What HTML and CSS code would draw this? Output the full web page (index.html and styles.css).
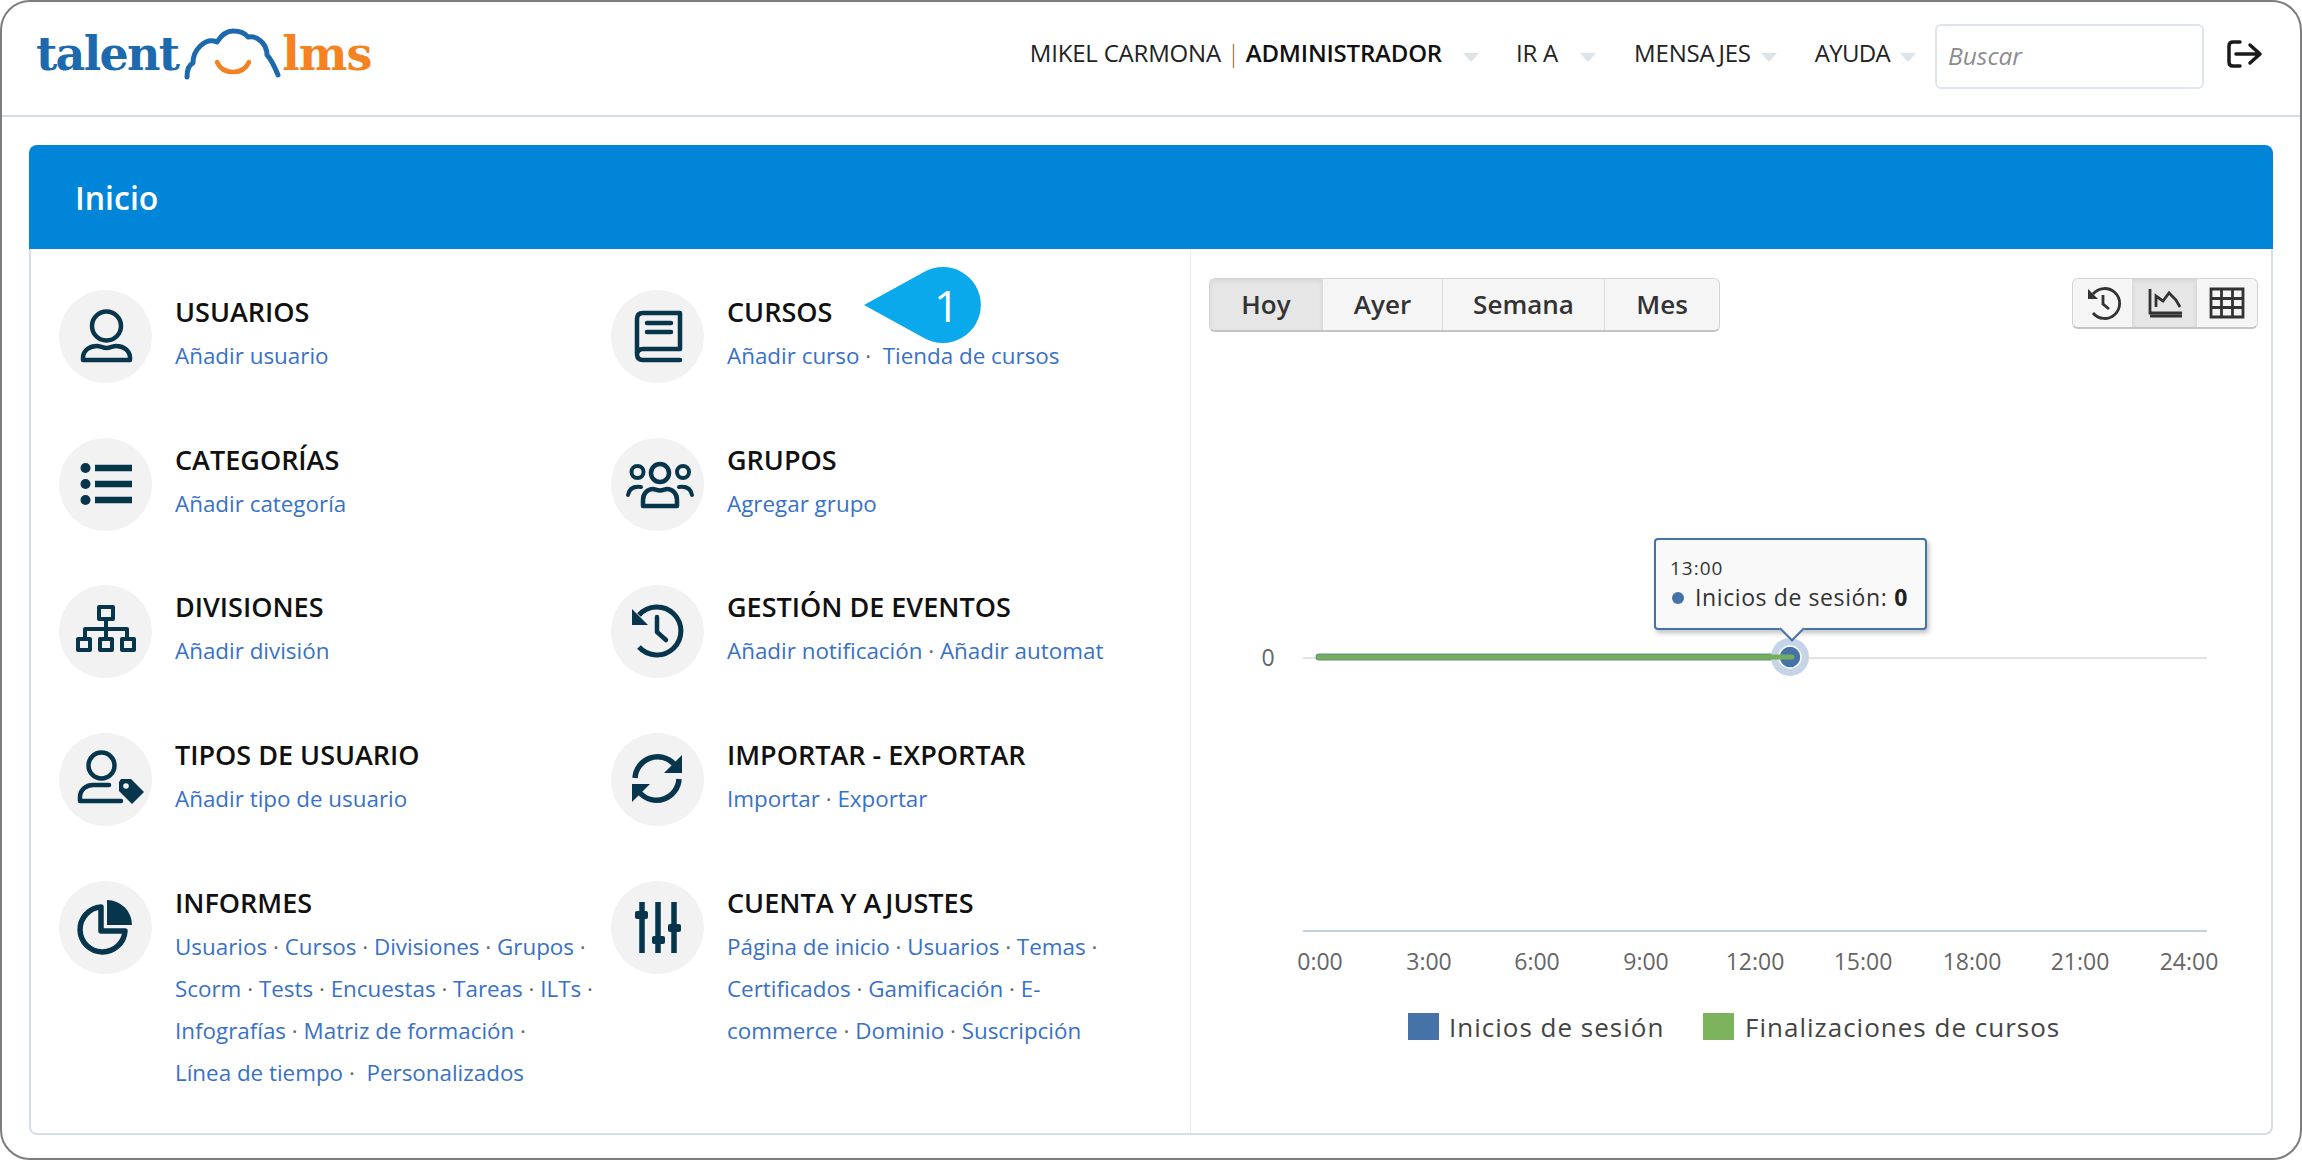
FILE: index.html
```html
<!DOCTYPE html>
<html lang="es">
<head>
<meta charset="utf-8">
<title>TalentLMS - Inicio</title>
<link rel="stylesheet" href="styles.css">
</head>
<body>
<div class="frame">
  <header class="topbar">
    <div class="logo">
      <span class="logo-talent">talent</span>
      <svg class="logo-cloud" width="102" height="52" viewBox="0 0 102 52">
        <path class="cloud-line" d="M5 49C5 43 7 37 11 35 11 22 23 9 35 14 40 6 46 3 51 3 58 3 63 5 66 9 75 7 85 16 85 27 90 32 93 40 96 47"/>
        <path class="smile-line" d="M35 34c3 7 9 10 16 10s13-3 16-10"/>
      </svg>
      <span class="logo-lms">lms</span>
    </div>
    <nav class="nav">
      <span class="nav-user">MIKEL CARMONA <span class="nav-pipe">|</span> <b class="nav-role">ADMINISTRADOR</b></span>
      <i class="caret caret-wide caret-first"></i>
      <span class="nav-item">IR A</span>
      <i class="caret caret-wide caret-second"></i>
      <span class="nav-item">MENSA<span class="gap-j">J</span>ES</span>
      <i class="caret"></i>
      <span class="nav-item nav-tight">AYUDA</span>
      <i class="caret caret-last"></i>
      <div class="search">Buscar</div>
      <svg class="logout" width="36" height="28" viewBox="0 0 36 28">
        <path class="logout-line" d="M13 2H6Q2 2 2 6V22Q2 26 6 26H13M9 14H32M23 5L33 14L23 23"/>
      </svg>
    </nav>
  </header>

  <main class="main">
    <section class="card">
      <h1 class="card-head">Inicio</h1>
      <div class="card-body">
        <div class="menu">
          <div class="item">
            <svg class="ico" viewBox="0 0 93 93"><circle class="disc" cx="46.5" cy="46.5" r="46.5"/><circle class="ln" cx="47.5" cy="36" r="14.5"/><path class="ln" d="M24 70v-2c0-8 7-12 14-12 3 0 6 2 9.500 2s6.500-2 9.500-2c7 0 14 4 14 12v2z"/></svg>
            <div class="txt"><h2>USUARIOS</h2><p><a>Añadir usuario</a></p></div>
          </div>
          <div class="item item-badge">
            <svg class="ico" viewBox="0 0 93 93"><circle class="disc" cx="46.500" cy="46.500" r="46.500"/><path class="ln" d="M69 59V23H32q-6 0-6 6V64q0 6 6 6H69M26 65q0-6 6-6H69"/><path class="ln" d="M36 33H60M36 42H60"/></svg>
            <div class="txt"><h2>CURSOS</h2><p><a>Añadir curso</a> ·&nbsp; <a>Tienda de cursos</a></p></div>
            <div class="badge">
              <svg width="118" height="76" viewBox="0 0 118 76"><path class="badge-shape" d="M0 38 60 5A38 38 0 1 1 60 71Z"/></svg>
              <span class="badge-num">1</span>
            </div>
          </div>

          <div class="item">
            <svg class="ico" viewBox="0 0 93 93"><circle class="disc" cx="46.500" cy="46.500" r="46.500"/><circle class="fill" cx="26.500" cy="30" r="5"/><circle class="fill" cx="26.500" cy="46" r="5"/><circle class="fill" cx="26.500" cy="62" r="5"/><path class="ln ln6" d="M36 30H73M36 46H73M36 62H73"/></svg>
            <div class="txt"><h2>CATEGORÍAS</h2><p><a>Añadir categoría</a></p></div>
          </div>
          <div class="item">
            <svg class="ico" viewBox="0 0 93 93"><circle class="disc" cx="46.500" cy="46.500" r="46.500"/><circle class="ln" cx="49" cy="35" r="9"/><circle class="ln ln35" cx="26.500" cy="34" r="6"/><circle class="ln ln35" cx="72" cy="34" r="6"/><path class="ln" d="M32 68V62c0-7 5-11 10-11 2 0 4 1.500 7 1.500s5-1.500 7-1.500c5 0 10 4 10 11v6z"/><path class="ln ln35" d="M17 57c1-6 5-9 13-8M81 57c-1-6-5-9-13-8"/></svg>
            <div class="txt"><h2>GRUPOS</h2><p><a>Agregar grupo</a></p></div>
          </div>

          <div class="item">
            <svg class="ico" viewBox="0 0 93 93"><circle class="disc" cx="46.500" cy="46.500" r="46.500"/><rect class="ln ln35" x="40" y="22" width="14" height="12"/><path class="ln ln35" d="M47 34V43M26 54V44H68V54M47 43V54"/><rect class="ln ln35" x="19" y="54" width="12" height="11"/><rect class="ln ln35" x="41" y="54" width="12" height="11"/><rect class="ln ln35" x="63" y="54" width="12" height="11"/></svg>
            <div class="txt"><h2>DIVISIONES</h2><p><a>Añadir división</a></p></div>
          </div>
          <div class="item">
            <svg class="ico" viewBox="0 0 93 93"><circle class="disc" cx="46.500" cy="46.500" r="46.500"/><path class="ln ln45" d="M28 30A24 24 0 1 1 28 62"/><path class="fill" d="M21 24V40H37Z"/><path class="ln ln4" d="M46 32V47L55 55"/></svg>
            <div class="txt"><h2>GESTIÓN DE EVENTOS</h2><p><a>Añadir notificación</a> · <a>Añadir automat</a></p></div>
          </div>

          <div class="item">
            <svg class="ico" viewBox="0 0 93 93"><circle class="disc" cx="46.500" cy="46.500" r="46.500"/><circle class="ln" cx="42.500" cy="32.500" r="13"/><path class="ln" d="M62 68H21v-4c0-8 7-12 13-12h16"/><path class="fill" d="M60 49 62 46H72L85 59 73 71 60 58Z"/><circle class="disc" cx="67" cy="53" r="2.800"/></svg>
            <div class="txt"><h2>TIPOS DE USUARIO</h2><p><a>Añadir tipo de usuario</a></p></div>
          </div>
          <div class="item">
            <svg class="ico" viewBox="0 0 93 93"><circle class="disc" cx="46.500" cy="46.500" r="46.500"/><path class="ln ln5" d="M24 45A22.500 22.500 0 0 1 63 31"/><path class="fill" d="M71 22V40H53Z"/><path class="ln ln5" d="M68 46A22.500 22.500 0 0 1 29 60"/><path class="fill" d="M21 69V51H39Z"/></svg>
            <div class="txt"><h2>IMPORTAR - EXPORTAR</h2><p><a>Importar</a> · <a>Exportar</a></p></div>
          </div>

          <div class="item">
            <svg class="ico" viewBox="0 0 93 93"><circle class="disc" cx="46.500" cy="46.500" r="46.500"/><path class="fill" d="M48 19A25 25 0 0 1 73 44H48Z"/><path class="ln ln5" d="M42 26A22.500 22.500 0 1 0 66 50H42Z"/></svg>
            <div class="txt"><h2>INFORMES</h2><p><a>Usuarios</a> · <a>Cursos</a> · <a>Divisiones</a> · <a>Grupos</a> ·<br><a>Scorm</a> · <a>Tests</a> · <a>Encuestas</a> · <a>Tareas</a> · <a>ILTs</a> ·<br><a>Infografías</a> · <a>Matriz de formación</a> ·<br><a>Línea de tiempo</a> ·&nbsp; <a>Personalizados</a></p></div>
          </div>
          <div class="item">
            <svg class="ico" viewBox="0 0 93 93"><circle class="disc" cx="46.500" cy="46.500" r="46.500"/><path class="ln ln5" d="M31 21V72M47 21V72M63 21V72"/><rect class="fill" x="24" y="30" width="13" height="8" rx="2"/><rect class="fill" x="41" y="55" width="13" height="8" rx="2"/><rect class="fill" x="57" y="43" width="13" height="8" rx="2"/></svg>
            <div class="txt"><h2>CUENTA Y A<span class="gap-j">J</span>USTES</h2><p><a>Página de inicio</a> · <a>Usuarios</a> · <a>Temas</a> ·<br><a>Certificados</a> · <a>Gamificación</a> · <a>E-</a><br><a>commerce</a> · <a>Dominio</a> · <a>Suscripción</a></p></div>
          </div>
        </div>

        <div class="stats">
          <div class="toolbar">
            <div class="btn-group">
              <button class="btn btn-hoy active">Hoy</button>
              <button class="btn btn-ayer">Ayer</button>
              <button class="btn btn-semana">Semana</button>
              <button class="btn btn-mes">Mes</button>
            </div>
            <div class="btn-group btn-group-icons">
              <button class="ibtn ibtn-a">
                <svg width="36" height="34" viewBox="0 0 36 34"><path class="tb-line" d="M8 8A15 15 0 1 1 8 27"/><path class="tb-fill" d="M3 3V13H13Z"/><path class="tb-line" d="M18 9V18L24 23"/></svg>
              </button>
              <button class="ibtn ibtn-b active">
                <svg width="36" height="30" viewBox="0 0 36 30"><path class="tb-line" d="M3 1V25H35"/><path class="tb-line" d="M9 19V8L16 13 22 5 29 12 33 19"/><path class="tb-line" d="M3 28H35"/></svg>
              </button>
              <button class="ibtn ibtn-c">
                <svg width="36" height="32" viewBox="0 0 36 32"><path class="tb-line" d="M2 2H34V30H2ZM12.500 2V30M23.500 2V30M2 11.500H34M2 20.500H34"/></svg>
              </button>
            </div>
          </div>

          <svg class="chart" width="1080" height="800" viewBox="1191 332 1080 800">
            <text class="axis-y" x="1268" y="666">0</text>
            <line class="grid" x1="1303" y1="658" x2="2207" y2="658"/>
            <line class="grid-x" x1="1303" y1="931" x2="2207" y2="931"/>
            <line class="series-a" x1="1319" y1="657" x2="1790" y2="657"/>
            <circle class="halo" cx="1790" cy="657" r="19"/>
            <circle class="dot" cx="1790" cy="657" r="11"/>
            <line class="series-b" x1="1319" y1="657" x2="1792" y2="657"/>
            <text class="axis-x" x="1320" y="970">0:00</text>
            <text class="axis-x" x="1429" y="970">3:00</text>
            <text class="axis-x" x="1537" y="970">6:00</text>
            <text class="axis-x" x="1646" y="970">9:00</text>
            <text class="axis-x" x="1755" y="970">12:00</text>
            <text class="axis-x" x="1863" y="970">15:00</text>
            <text class="axis-x" x="1972" y="970">18:00</text>
            <text class="axis-x" x="2080" y="970">21:00</text>
            <text class="axis-x" x="2189" y="970">24:00</text>
            <rect class="leg-a" x="1408" y="1013" width="31" height="27"/>
            <text class="leg-text" x="1449" y="1037">Inicios de sesión</text>
            <rect class="leg-b" x="1703" y="1013" width="31" height="27"/>
            <text class="leg-text" x="1745" y="1037">Finalizaciones de cursos</text>
          </svg>

          <div class="tooltip">
            <div class="tip-time">13:00</div>
            <div class="tip-row"><i class="tip-dot"></i>Inicios de sesión: <b>0</b></div>
          </div>
        </div>
      </div>
    </section>
  </main>
</div>
</body>
</html>
```
FILE: styles.css
```css
* { box-sizing: border-box; }
html, body { margin: 0; padding: 0; background: #fff; }
body { font-family: "Open Sans", "Liberation Sans", sans-serif; color: #222; font-kerning: none; }

.frame {
  width: 2302px; height: 1160px;
  border: 2px solid #7d7d7d; border-radius: 30px;
  background: #fff; overflow: hidden;
}

/* top bar */
.topbar {
  height: 115px; border-bottom: 2px solid #d4dde5;
  display: flex; align-items: flex-start; justify-content: space-between;
  padding: 0 37px 0 34px;
}
.logo { display: flex; align-items: flex-start; margin-top: 26px; height: 56px; }
.logo-talent, .logo-lms {
  font-family: "DejaVu Serif", "Liberation Serif", serif;
  font-weight: 700; font-size: 46px; line-height: 52px; font-kerning: normal;
}
.logo-talent { color: #1d69ad; letter-spacing: -1.700px; }
.logo-lms { color: #f58220; letter-spacing: -1px; }
.logo-cloud { margin: 0 -2px 0 4px; }
.cloud-line { fill: none; stroke: #1d69ad; stroke-width: 5; stroke-linecap: round; stroke-linejoin: round; }
.smile-line { fill: none; stroke: #f58220; stroke-width: 4.500; stroke-linecap: round; }

.nav { display: flex; align-items: center; height: 65px; margin-top: 22px; font-size: 24px; color: #222; }
.nav-user, .nav-item { white-space: nowrap; letter-spacing: -0.2px; margin-top: -9px; }
.nav-tight { letter-spacing: -0.700px; }
.nav-pipe { color: #8a6a3a; font-weight: 300; }
.nav-role { font-weight: 600; color: #111; }
.gap-j { margin-left: 4px; }
.caret {
  width: 0; height: 0; margin: 2px 38px 0 10px;
  border-left: 8px solid transparent; border-right: 8px solid transparent;
  border-top: 9px solid #dde3e7;
}
.caret-wide { margin-left: 21px; }
.caret-first { margin-right: 37px; }
.caret-second { margin-left: 22px; }
.caret-last { margin-right: 19px; }
.search {
  width: 269px; height: 65px; padding: 0 11px;
  border: 2px solid #dfe5ea; border-radius: 6px;
  font-style: italic; font-size: 24.500px; line-height: 59px; color: #8c8c8c;
}
.logout { margin-left: 23px; margin-top: -6px; }
.logout-line { fill: none; stroke: #1a1a1a; stroke-width: 3.500; stroke-linecap: round; stroke-linejoin: round; }

/* card */
.main { padding: 28px 27px 0; }
.card { border-radius: 8px; }
.card-head {
  margin: 0; height: 104px; padding-left: 46px;
  background: #0085d9; border-radius: 8px 8px 0 0;
  color: #fff; font-size: 32px; font-weight: 600; line-height: 105px;
}
.card-body {
  display: flex; height: 886px; position: relative;
  border: 2px solid #d6dfe8; border-top: 0; border-radius: 0 0 8px 8px;
}

/* menu */
.menu {
  width: 1160px; flex: none; padding: 41px 0 0 28px;
  border-right: 1px solid #e6ebf0;
  display: grid; grid-template-columns: 552px 1fr; grid-auto-rows: 147.700px;
}
.item { display: flex; align-items: flex-start; gap: 23px; }
.item-badge { position: relative; }
.ico { width: 93px; height: 93px; flex: none; }
.disc { fill: #f2f2f2; }
.fill { fill: #07364c; }
.ln { fill: none; stroke: #07364c; stroke-width: 4.500; stroke-linejoin: round; stroke-linecap: round; }
.ln35 { stroke-width: 4; }
.ln4 { stroke-width: 4.500; }
.ln45 { stroke-width: 5; stroke-linecap: butt; }
.ln5 { stroke-width: 5.500; stroke-linecap: butt; }
.ln6 { stroke-width: 6.500; stroke-linecap: butt; }
.txt h2 { margin: 4px 0 0; font-size: 27px; font-weight: 600; line-height: 36px; color: #111; letter-spacing: 0; white-space: nowrap; }
.txt p { margin: 5px 0 0; font-size: 22.400px; line-height: 42.200px; color: #666; white-space: nowrap; }
.txt a { color: #3871c8; }

.badge { position: absolute; left: 253px; top: -23px; width: 118px; height: 76px; }
.badge-shape { fill: #0aa9ec; }
.badge-num {
  position: absolute; left: 70px; top: 0; width: 20px; text-align: center;
  color: #fff; font-size: 44px; line-height: 76px; font-weight: 400;
}

/* stats */
.stats { flex: 1; position: relative; display: flex; flex-direction: column; }
.toolbar { display: flex; justify-content: space-between; align-items: flex-start; padding: 29px 13px 0 18px; }
.btn-group {
  display: flex; height: 54px;
  border: 1px solid #d4d4d4; border-bottom: 2px solid #c4c4c4; border-radius: 6px;
  background: #f5f5f5; overflow: hidden;
}
.btn-group-icons { height: 51px; }
.btn, .ibtn {
  border: 0; border-right: 1px solid #dcdcdc; background: none; padding: 0; margin: 0;
  font-family: inherit; font-size: 26px; font-weight: 600; color: #333; font-kerning: none;
  display: flex; align-items: center; justify-content: center;
}
.btn { padding-bottom: 2px; }
.btn:last-child, .ibtn:last-child { border-right: 0; }
.btn.active, .ibtn.active { background: #e6e6e6; box-shadow: inset 0 2px 4px rgba(0,0,0,.08); }
.btn-hoy { width: 113px; }
.btn-ayer { width: 120px; }
.btn-semana { width: 162px; }
.btn-mes { width: 114px; }
.ibtn-a { width: 60px; }
.ibtn-b { width: 64px; }
.ibtn-c { width: 60px; }
.tb-line { fill: none; stroke: #333; stroke-width: 2.800; }
.tb-fill { fill: #333; }

.chart { display: block; }
.grid { stroke: #e2e2e2; stroke-width: 2; }
.grid-x { stroke: #c0d0e0; stroke-width: 2; }
.series-a { stroke: #5f8f86; stroke-width: 7; stroke-linecap: round; }
.series-b { stroke: #74ae5c; stroke-width: 5; stroke-linecap: round; }
.halo { fill: #c5d4e6; }
.dot { fill: #4572a7; stroke: #fff; stroke-width: 1.500; }
.axis-x { font-size: 23px; fill: #666; text-anchor: middle; }
.axis-y { font-size: 23px; fill: #666; text-anchor: middle; }
.leg-a { fill: #4572a7; }
.leg-b { fill: #7cb35c; }
.leg-text { font-size: 26px; fill: #444; letter-spacing: 1px; }

.tooltip {
  position: absolute; left: 463px; top: 289px; width: 273px; height: 92px;
  background: #f9f9f9; border: 2px solid #4572a7; border-radius: 4px;
  box-shadow: 2px 3px 5px rgba(0,0,0,.25); padding: 15px 0 0 14px; color: #333;
}
.tooltip::after {
  content: ""; position: absolute; left: 127px; bottom: -10px; width: 16px; height: 16px;
  background: #f9f9f9; border-right: 2px solid #4572a7; border-bottom: 2px solid #4572a7;
  transform: rotate(45deg);
}
.tip-time { font-size: 19px; line-height: 26px; letter-spacing: 1px; }
.tip-row { font-size: 23px; line-height: 32px; letter-spacing: .6px; white-space: nowrap; display: flex; align-items: center; }
.tip-row b { margin-left: 7px; font-weight: 700; color: #222; }
.tip-dot { width: 12px; height: 12px; border-radius: 50%; background: #4572a7; margin: 2px 11px 0 2px; flex: none; }
```
